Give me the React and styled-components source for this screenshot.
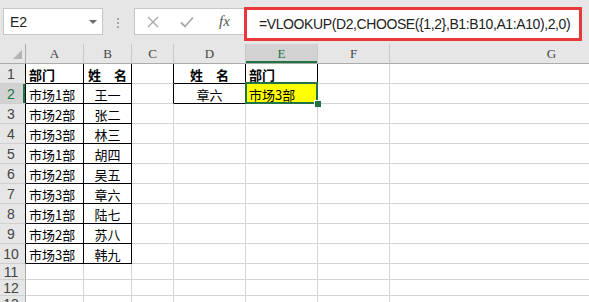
import { Fragment } from "react";
import styled, { createGlobalStyle, css } from "styled-components";

const GlobalStyle = createGlobalStyle`
  html, body {
    margin: 0;
    padding: 0;
    background: #ffffff;
    overflow: hidden;
  }
`;

const GREEN = "#217346";
const GRID = "#d4d4d4";

const Window = styled.div`
  width: 589px;
  height: 302px;
  overflow: hidden;
  background: #ffffff;
`;

const FormulaBar = styled.div`
  display: flex;
  align-items: flex-start;
  height: 44px;
  background: #e6e6e6;
  box-sizing: border-box;
  padding: 8px 0 0 3px;
`;

const NameBox = styled.div`
  display: flex;
  align-items: center;
  justify-content: space-between;
  box-sizing: border-box;
  width: 100px;
  height: 27px;
  padding: 0 5px 0 6px;
  background: #ffffff;
  border: 1px solid #c6c6c6;
  font-family: "Liberation Sans", Arial, sans-serif;
  font-size: 14px;
  color: #222;
`;

const Caret = styled.span`
  width: 0;
  height: 0;
  border-left: 4px solid transparent;
  border-right: 4px solid transparent;
  border-top: 4px solid #6d6d6d;
`;

const Grip = styled.div`
  display: flex;
  flex-direction: column;
  gap: 2px;
  margin: 10px 15px 0 14px;

  span {
    width: 2px;
    height: 2px;
    background: #a6a6a6;
  }
`;

const ActionBox = styled.div`
  display: flex;
  align-items: center;
  box-sizing: border-box;
  width: 110px;
  height: 27px;
  padding-left: 12px;
  gap: 21px;
  background: #ffffff;
  border: 1px solid #c6c6c6;
  border-right: none;
`;

const Fx = styled.span`
  font-family: "Liberation Serif", "Times New Roman", serif;
  font-style: italic;
  font-size: 15px;
  color: #555;
  margin-left: 4px;
`;

const FormulaInput = styled.div`
  display: flex;
  align-items: center;
  box-sizing: border-box;
  width: 338px;
  height: 34px;
  margin-top: -1px;
  padding-left: 12px;
  background: #ffffff;
  border: 3px solid #e8383c;
  font-family: "Liberation Sans", Arial, sans-serif;
  font-size: 14px;
  letter-spacing: -0.4px;
  color: #222;
  white-space: nowrap;
`;

const Sheet = styled.div`
  display: grid;
  grid-template-columns: 26px 58px 48px 42px 72px 72px 72px 324px;
  grid-template-rows: 20px repeat(10, 20px) repeat(3, 16px);
`;

const Corner = styled.div`
  position: relative;
  background: #e6e6e6;
  border-right: 1px solid #ababab;
  border-bottom: 1px solid #ababab;

  &::after {
    content: "";
    position: absolute;
    right: 3px;
    bottom: 4px;
    width: 9px;
    height: 9px;
    background: #b4b4b4;
    clip-path: polygon(100% 0, 100% 100%, 0 100%);
  }
`;

const ColHead = styled.div`
  display: flex;
  align-items: center;
  justify-content: center;
  background: ${(p) => (p.$active ? "#d2d2d2" : "#e6e6e6")};
  border-right: 1px solid #c8c8c8;
  border-bottom: 1px solid #ababab;
  box-shadow: ${(p) => (p.$active ? `inset 0 -2px 0 ${GREEN}` : "none")};
  font-family: "Liberation Serif", "Times New Roman", serif;
  font-size: 13px;
  color: ${(p) => (p.$active ? GREEN : "#444")};
`;

const RowHead = styled.div`
  display: flex;
  align-items: center;
  justify-content: center;
  padding-right: 3px;
  background: ${(p) => (p.$active ? "#d2d2d2" : "#e6e6e6")};
  border-right: 1px solid ${(p) => (p.$edge ? "#000" : "#ababab")};
  border-bottom: 1px solid #d0d0d0;
  box-shadow: ${(p) => (p.$active ? `inset -2px 0 0 ${GREEN}` : "none")};
  font-family: "Liberation Sans", Arial, sans-serif;
  font-size: 14px;
  color: ${(p) => (p.$active ? GREEN : "#444")};
`;

const Cell = styled.div`
  position: relative;
  display: flex;
  align-items: center;
  justify-content: ${(p) => (p.$align === "center" ? "center" : "flex-start")};
  padding-left: ${(p) => (p.$align === "center" ? "0" : "3px")};
  padding-top: 1px;
  background: ${(p) => (p.$fill ? "#ffff00" : "#ffffff")};
  border-right: 1px solid ${(p) => (p.$rb ? "#000" : GRID)};
  border-bottom: 1px solid ${(p) => (p.$bb ? "#000" : GRID)};
  font-family: "Noto Sans CJK SC", "Liberation Sans", sans-serif;
  font-size: 13px;
  font-weight: ${(p) => (p.$bold ? 700 : 400)};
  color: #000;
  white-space: nowrap;
  ${(p) =>
    p.$selected &&
    css`
      &::before {
        content: "";
        position: absolute;
        top: -2px;
        left: -1px;
        right: -1px;
        bottom: -1px;
        border: 2px solid ${GREEN};
        pointer-events: none;
      }
    `}
`;

const Handle = styled.span`
  position: absolute;
  right: -4px;
  bottom: -4px;
  width: 6px;
  height: 6px;
  background: ${GREEN};
  border-left: 1px solid #fff;
  border-top: 1px solid #fff;
  z-index: 2;
`;

const COLS = ["A", "B", "C", "D", "E", "F", "G"];

const DATA = [
  ["部门", "姓\u3000名", "", "姓\u3000名", "部门"],
  ["市场1部", "王一", "", "章六", "市场3部"],
  ["市场2部", "张二"],
  ["市场3部", "林三"],
  ["市场1部", "胡四"],
  ["市场2部", "吴五"],
  ["市场3部", "章六"],
  ["市场1部", "陆七"],
  ["市场2部", "苏八"],
  ["市场3部", "韩九"],
];

const ALIGN = ["left", "center", "left", "center", "left", "left", "left"];

const cellProps = (r, c) => {
  const inLeftTable = r < 10 && c <= 1;
  const inRightTable = r < 2 && (c === 3 || c === 4);
  return {
    $rb: inLeftTable || inRightTable || (r < 2 && c === 2),
    $bb: inLeftTable || inRightTable,
    $bold: r === 0,
    $align: ALIGN[c],
    $fill: r === 1 && c === 4,
    $selected: r === 1 && c === 4,
  };
};

const Cross = () => (
  <svg width="12" height="12" viewBox="0 0 12 12">
    <path d="M1 1 L11 11 M11 1 L1 11" stroke="#a8a8a8" strokeWidth="1.4" fill="none" />
  </svg>
);

const Check = () => (
  <svg width="14" height="12" viewBox="0 0 14 12">
    <path d="M1 6.5 L5 10.5 L13 1.5" stroke="#a8a8a8" strokeWidth="1.8" fill="none" />
  </svg>
);

export default function App() {
  const rowCount = 13;
  return (
    <Window>
      <GlobalStyle />
      <FormulaBar>
        <NameBox>
          E2
          <Caret />
        </NameBox>
        <Grip>
          <span />
          <span />
          <span />
        </Grip>
        <ActionBox>
          <Cross />
          <Check />
          <Fx>fx</Fx>
        </ActionBox>
        <FormulaInput>=VLOOKUP(D2,CHOOSE({"{"}1,2{"}"},B1:B10,A1:A10),2,0)</FormulaInput>
      </FormulaBar>
      <Sheet>
        <Corner />
        {COLS.map((c) => (
          <ColHead key={c} $active={c === "E"}>
            {c}
          </ColHead>
        ))}
        {Array.from({ length: rowCount }, (_, r) => (
          <Fragment key={r}>
            <RowHead $active={r === 1} $edge={r < 10}>
              {r + 1}
            </RowHead>
            {COLS.map((c, ci) => {
              const p = cellProps(r, ci);
              const text = (DATA[r] && DATA[r][ci]) || "";
              return (
                <Cell key={c} {...p}>
                  {text}
                  {p.$selected && <Handle />}
                </Cell>
              );
            })}
          </Fragment>
        ))}
      </Sheet>
    </Window>
  );
}
